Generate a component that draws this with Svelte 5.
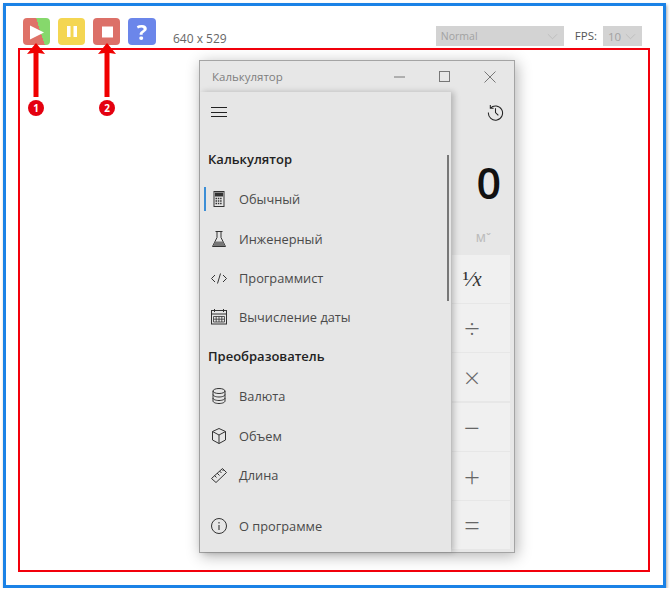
<script>
  const top = [
    { label: 'Обычный', icon: 'calc', active: true },
    { label: 'Инженерный', icon: 'flask' },
    { label: 'Программист', icon: 'code' },
    { label: 'Вычисление даты', icon: 'cal' }
  ];
  const conv = [
    { label: 'Валюта', icon: 'db' },
    { label: 'Объем', icon: 'cube' },
    { label: 'Длина', icon: 'ruler' }
  ];
  const ops = ['÷', '×', '−', '+', '='];
</script>

{#snippet icon(name)}
  <svg class="ic" viewBox="0 0 18 18" fill="none" stroke="#333" stroke-width="1">
    {#if name === 'calc'}
      <rect x="4" y="1.500" width="10" height="15" />
      <rect x="5.500" y="3" width="7" height="3" fill="#333" />
      <path d="M5.500 8.500h1.500m.8 0h1.500m.8 0h1.500M5.500 11h1.500m.8 0h1.500m.8 0h1.500M5.500 13.500h1.500m.8 0h1.500m.8 0h1.500" stroke-width="1.400" />
    {:else if name === 'flask'}
      <path d="M5.500 1.500h7M7 1.500v6L2.500 16.500h13L11 7.500v-6" />
      <path d="M5 11.500h8l2 4.500H3z" fill="#777" stroke="none" />
    {:else if name === 'code'}
      <path d="M5 6L1.500 9.500 5 13M13 6l3.500 3.500L13 13M10.500 4.500l-3 10" />
    {:else if name === 'cal'}
      <rect x="1.500" y="2.500" width="15" height="13.500" />
      <path d="M1.500 6h15M4.500 1v3M13.500 1v3" />
      <path d="M3.500 8.500h11v5.500h-11zM6.200 8.500v5.500M9 8.500v5.500M11.800 8.500v5.500M3.500 11.200h11" stroke-width=".8" />
    {:else if name === 'db'}
      <ellipse cx="9" cy="4" rx="6" ry="2.500" />
      <path d="M3 4v10c0 1.400 2.700 2.500 6 2.500s6-1.100 6-2.500V4M3 7.500c0 1.400 2.700 2.500 6 2.500s6-1.100 6-2.500M3 11c0 1.400 2.700 2.500 6 2.500s6-1.100 6-2.500" />
    {:else if name === 'cube'}
      <path d="M9 1.500l6.500 3v8.500L9 16.500 2.500 13V4.500zM2.500 4.500L9 8l6.500-3.500M9 8v8.500" />
    {:else if name === 'ruler'}
      <path d="M12.500 2.500l4 4L6 16.500l-4.500-4zM4.500 9.500l2 2M7 7l2.500 2.500M9.500 5l2 2M12 3.500l1.500 1.500" />
    {:else if name === 'info'}
      <circle cx="9" cy="9" r="7.500" />
      <path d="M9 8v5M9 5v1.500" stroke-width="1.100" />
    {/if}
  </svg>
{/snippet}

{#snippet row(item)}
  <div class="item">
    {#if item.active}<span class="bar"></span>{/if}
    {@render icon(item.icon)}
    <span>{item.label}</span>
  </div>
{/snippet}

<div class="frame">
  <header class="toolbar">
    <div class="tool play">
      <svg viewBox="0 0 27 27"><path d="M7 7.500l14 7L7 21.500z" fill="#fff" /></svg>
    </div>
    <div class="tool pause">
      <svg viewBox="0 0 27 27"><path d="M9 8h3.500v11H9zM15.500 8H19v11h-3.500z" fill="#fff" /></svg>
    </div>
    <div class="tool stop">
      <svg viewBox="0 0 27 27"><path d="M9 8.500h11v11H9z" fill="#fff" /></svg>
    </div>
    <div class="tool help">?</div>
    <span class="size">640 x 529</span>
    <div class="select wide">
      <span>Normal</span>
      <svg viewBox="0 0 12 7"><path d="M1 1l5 5 5-5" fill="none" stroke="#bcbcbc" /></svg>
    </div>
    <span class="fps">FPS:</span>
    <div class="select narrow">
      <span>10</span>
      <svg viewBox="0 0 12 7"><path d="M1 1l5 5 5-5" fill="none" stroke="#bcbcbc" /></svg>
    </div>
  </header>

  <section class="stage">
    <div class="window">
      <div class="titlebar">
        <span class="title">Калькулятор</span>
        <div class="controls">
          <svg viewBox="0 0 12 12"><path d="M0 6h11" stroke="#777" fill="none" /></svg>
          <svg viewBox="0 0 12 12"><rect x=".5" y=".5" width="10" height="10" stroke="#777" fill="none" /></svg>
          <svg viewBox="0 0 12 12"><path d="M.5.500l11 11m0-11l-11 11" stroke="#777" fill="none" /></svg>
        </div>
      </div>
      <div class="main">
        <svg class="history" viewBox="0 0 18 18" fill="none" stroke="#222" stroke-width="1.100">
          <path d="M3.500 4.500A7.500 7.500 0 1 1 1.500 9M3.500 1v3.500H7M9 4.500V9l3 3" />
        </svg>
        <div class="zero">0</div>
        <div class="mem">Mˇ</div>
        <div class="keys">
          <div class="key frac"><span>¹⁄</span><i>x</i></div>
          {#each ops as op}
            <div class="key">{op}</div>
          {/each}
        </div>
      </div>
      <nav class="nav">
        <div class="burger"><span></span><span></span><span></span></div>
        <h3>Калькулятор</h3>
        {#each top as item}{@render row(item)}{/each}
        <h3>Преобразователь</h3>
        {#each conv as item}{@render row(item)}{/each}
        <div class="about">{@render row({ label: 'О программе', icon: 'info' })}</div>
        <span class="scroll"></span>
      </nav>
    </div>
  </section>

  <svg class="arrow a1" viewBox="0 0 20 74">
    <path d="M10 0l9 11-6.500-1v44h-5V10L1 11z" fill="#f00000" />
  </svg>
  <span class="badge b1">1</span>
  <svg class="arrow a2" viewBox="0 0 20 74">
    <path d="M10 0l9 11-6.500-1v44h-5V10L1 11z" fill="#f00000" />
  </svg>
  <span class="badge b2">2</span>
</div>

<style>
  :global(body) {
    margin: 0;
    background: #fff;
    font-family: "Open Sans", "Liberation Sans", sans-serif;
  }
  .frame {
    position: relative;
    box-sizing: border-box;
    width: 663px;
    height: 585px;
    margin: 3px 0 0 3px;
    border: 3px solid #1b82e6;
    box-shadow: 1px 2px 3px rgba(0, 0, 0, 0.35);
    background: #fff;
  }
  .toolbar {
    box-sizing: border-box;
    display: flex;
    align-items: flex-start;
    height: 42px;
    padding: 12px 21px 0 17px;
    gap: 8px;
  }
  .tool {
    width: 27px;
    height: 27px;
    border-radius: 4px;
    flex: none;
    filter: blur(0.4px);
  }
  .tool svg {
    display: block;
  }
  .play {
    background: linear-gradient(72deg, #df7268 0 61%, #86d86c 61%);
  }
  .pause {
    background: #f4d652;
  }
  .stop {
    background: #dc7068;
  }
  .help {
    width: 28px;
    background: #6b86ea;
    color: #fff;
    font: 700 22px/27px "Open Sans", sans-serif;
    text-align: center;
  }
  .size {
    margin: 13px 0 0 9px;
    font-size: 12px;
    line-height: 16px;
    color: #666;
  }
  .select {
    box-sizing: border-box;
    display: flex;
    align-items: center;
    justify-content: space-between;
    height: 20px;
    margin-top: 8px;
    padding: 0 6px 0 5px;
    background: #d3d3d3;
    color: #a2a2a2;
    font-size: 10.500px;
  }
  .select svg {
    width: 11px;
    height: 7px;
  }
  .wide {
    width: 128px;
    margin-left: auto;
  }
  .narrow {
    width: 39px;
    margin-left: -2px;
    padding-left: 5px;
    font-size: 11.500px;
  }
  .fps {
    margin: 10px 0 0 3px;
    font-size: 11.500px;
    line-height: 16px;
    color: #555;
  }
  .stage {
    box-sizing: border-box;
    width: 632px;
    height: 524px;
    margin-left: 12px;
    padding: 10px 0 0 179px;
    border: 2px solid #f2000c;
  }
  .window {
    position: relative;
    box-sizing: border-box;
    width: 316px;
    height: 493px;
    display: flex;
    flex-direction: column;
    background: #e7e7e7;
    border: 1px solid #a4a4a4;
    box-shadow: 2px 3px 14px rgba(0, 0, 0, 0.3);
  }
  .titlebar {
    display: flex;
    align-items: center;
    justify-content: space-between;
    height: 31px;
    padding: 0 18px 0 12px;
    flex: none;
  }
  .title {
    font-size: 11.500px;
    color: #7e7e7e;
  }
  .controls {
    display: flex;
    gap: 33px;
  }
  .controls svg {
    width: 12px;
    height: 12px;
  }
  .main {
    flex: 1;
    display: flex;
    flex-direction: column;
    align-items: flex-end;
    padding-right: 4px;
  }
  .history {
    width: 17px;
    height: 17px;
    margin: 12px 6px 0 0;
  }
  .zero {
    margin: 32px 9px 0 0;
    font-size: 43px;
    font-weight: 600;
    line-height: 60px;
    color: #111;
  }
  .mem {
    margin: 17px 19px 0 0;
    font-size: 11px;
    font-weight: 600;
    line-height: 16px;
    color: #bdbdbd;
  }
  .keys {
    width: 58px;
    margin-top: 9px;
    display: grid;
    grid-auto-rows: 48px;
    gap: 1.200px;
  }
  .key {
    display: flex;
    align-items: center;
    justify-content: center;
    background: #f0f0f0;
    color: #666;
    font-size: 28px;
    font-weight: 300;
    padding-right: 18px;
  }
  .frac {
    font-family: "Liberation Serif", serif;
    color: #333;
    font-size: 22px;
  }
  .frac i {
    font-size: 20px;
  }
  .nav {
    position: absolute;
    left: 0;
    top: 31px;
    bottom: 0;
    box-sizing: border-box;
    width: 251px;
    display: flex;
    flex-direction: column;
    padding-bottom: 6.500px;
    background: #e6e6e6;
    box-shadow: 3px 0 6px rgba(0, 0, 0, 0.22);
  }
  .burger {
    height: 40px;
    margin-bottom: 8.200px;
    flex: none;
    display: flex;
    flex-direction: column;
    justify-content: center;
    gap: 3.500px;
    padding-left: 11px;
    box-sizing: border-box;
  }
  .burger span {
    display: block;
    width: 16px;
    height: 1px;
    background: #222;
  }
  h3 {
    margin: 0;
    height: 39.400px;
    flex: none;
    padding-left: 8px;
    font-size: 13px;
    font-weight: 600;
    line-height: 39.400px;
    color: #222;
  }
  .item {
    position: relative;
    flex: none;
    height: 39.400px;
    display: flex;
    align-items: center;
    gap: 11px;
    padding-left: 10px;
    font-size: 12.800px;
    color: #4a4a4a;
  }
  .ic {
    width: 18px;
    height: 18px;
    flex: none;
  }
  .bar {
    position: absolute;
    left: 4px;
    top: 7px;
    width: 2px;
    height: 24px;
    background: #3b8ed6;
  }
  .about {
    margin-top: auto;
  }
  .scroll {
    position: absolute;
    left: 247px;
    top: 63px;
    width: 2px;
    height: 146px;
    background: #777;
  }
  .arrow {
    position: absolute;
    width: 20px;
    height: 74px;
    top: 37px;
  }
  .a1 {
    left: 20px;
  }
  .a2 {
    left: 91px;
  }
  .badge {
    position: absolute;
    top: 94px;
    width: 16px;
    height: 16px;
    border-radius: 50%;
    background: #e4000f;
    color: #fff;
    font: 700 10px/16px "Open Sans", sans-serif;
    text-align: center;
  }
  .b1 {
    left: 22px;
  }
  .b2 {
    left: 93px;
  }
</style>
